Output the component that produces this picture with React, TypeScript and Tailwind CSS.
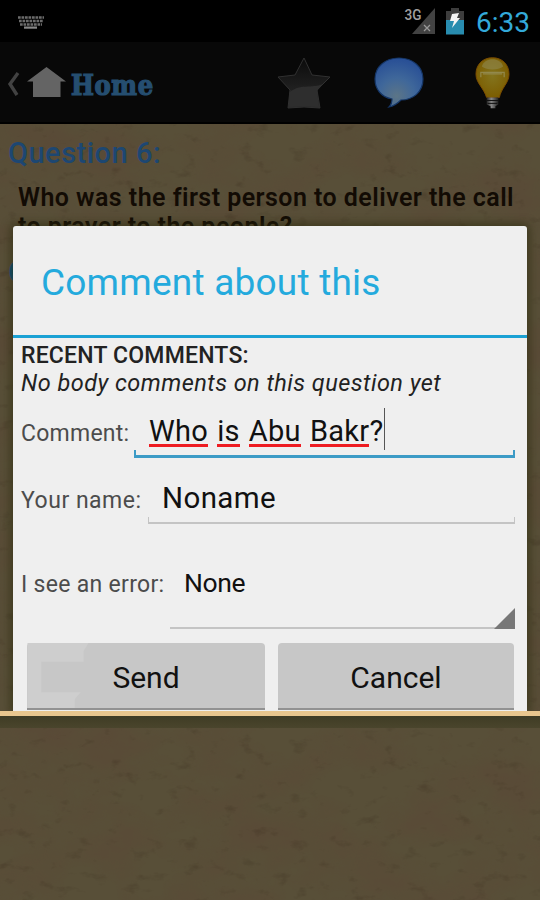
import type { ReactNode } from 'react'

function Paper() {
  return (
    <svg className="absolute inset-0 h-full w-full" preserveAspectRatio="none">
      <filter id="grain" x="0" y="0" width="100%" height="100%" colorInterpolationFilters="sRGB">
        <feTurbulence type="fractalNoise" baseFrequency="0.015 0.02" numOctaves="5" seed="8" />
        <feColorMatrix values="0 0 0 0 0.36  0 0 0 0 0.27  0 0 0 0 0.21  1.6 0 0 0 -0.6" />
      </filter>
      <filter id="specks" x="0" y="0" width="100%" height="100%" colorInterpolationFilters="sRGB">
        <feTurbulence type="fractalNoise" baseFrequency="0.055 0.09" numOctaves="4" seed="21" />
        <feColorMatrix values="0 0 0 0 0.22  0 0 0 0 0.17  0 0 0 0 0.11  0 4 0 0 -2.5" />
      </filter>
      <rect width="100%" height="100%" filter="url(#grain)" opacity="0.6" />
      <rect width="100%" height="100%" filter="url(#specks)" opacity="0.24" />
    </svg>
  )
}

function StatusBar() {
  return (
    <div className="flex h-[42px] items-start justify-between bg-black pl-[18px] pr-[11px]">
      <svg className="mt-4 h-[13px] w-[26px]" viewBox="0 0 26 13">
        <path d="M0 1.500h26M1 5h24M2 8.500h22" stroke="#6c6c6c" strokeWidth="2.6" strokeDasharray="2.7 0.8" fill="none" />
        <path d="M6 11.600h13" stroke="#888" strokeWidth="2.200" />
      </svg>
      <div className="flex items-start">
        <svg className="mt-[7px] h-7 w-8" viewBox="0 0 32 28">
          <path d="M8 27 31 1v26z" fill="#424242" />
          <path d="m20 18 6 6m0-6-6 6" stroke="#999" strokeWidth="1.3" />
          <text x="0.5" y="12.500" fontSize="15" fontWeight="500" fill="#a0a0a0" fontFamily="Roboto, sans-serif" textLength="17" lengthAdjust="spacingAndGlyphs">3G</text>
        </svg>
        <svg className="ml-[10px] mt-2 h-[27px] w-[18px]" viewBox="0 0 18 27">
          <path d="M0 3h5V0h8v3h5v10H0z" fill="#3d3d3d" />
          <path d="M0 12h18v14.500H0z" fill="#288caf" />
          <path d="m6 6 7-1-2 5h3L6 20l2-7H4z" fill="#f4f4f4" />
        </svg>
        <span className="ml-3 mt-[7px] w-[53px] whitespace-nowrap text-[28px] leading-8 text-[#33a9d9]">6:33</span>
      </div>
    </div>
  )
}

function ActionBar() {
  return (
    <div className="flex h-[82px] items-center border-b-2 border-black bg-[#080808]">
      <svg className="ml-[7px] mt-[3px] h-[26px] w-[13px]" viewBox="0 0 13 26">
        <path d="M11 2 3 13l7 11" fill="none" stroke="#424242" strokeWidth="3.4" />
      </svg>
      <svg className="ml-[7px] h-[30px] w-[39px]" viewBox="0 0 39 30">
        <path d="M19.500 0 39 14.500h-5.500V30H6V14.500H0z" fill="#646464" />
      </svg>
      <span className="ml-[5px] mt-[7px] w-[83px] whitespace-nowrap font-['DejaVu_Serif_Condensed','DejaVu_Serif',serif] text-[27px] font-bold leading-8 tracking-[0.6px] text-[#254e70] [-webkit-text-stroke:1.2px_#254e70]">
        Home
      </span>
      <svg className="ml-[122px] mt-[2px] h-[54px] w-[56px] shrink-0" viewBox="0 0 56 54">
        <defs>
          <linearGradient id="star" x1="0" y1="0" x2="0" y2="1">
            <stop offset="0" stopColor="#0b0b0b" />
            <stop offset="0.5" stopColor="#1c1c1c" />
            <stop offset="1" stopColor="#2c2c2c" />
          </linearGradient>
        </defs>
        <path d="m28 2 8 17 18 2-13 13 3 18-16-1-16 1 2-18L2 21l17-2z" fill="url(#star)" stroke="#303030" />
        <path d="M13 37c10-10 23-4 34-9l-6 7 2 16-15-1-15 1z" fill="#2e2e2e" />
      </svg>
      <svg className="ml-[40px] h-[54px] w-[54px] shrink-0" viewBox="0 0 54 54">
        <defs>
          <radialGradient id="bubble" cx="0.45" cy="0.78" r="0.75">
            <stop offset="0" stopColor="#5c7587" />
            <stop offset="0.5" stopColor="#3f679a" />
            <stop offset="1" stopColor="#295096" />
          </radialGradient>
        </defs>
        <path d="M27 3c14 0 24 9 24 21 0 13-10 21-22 21-3 3-7 6-12 7 3-3 3-5 3-8C9 42 3 34 3 24 3 12 13 3 27 3z" fill="url(#bubble)" stroke="#153667" strokeWidth="1.2" />
      </svg>
      <svg className="ml-[49px] mt-[2px] h-[54px] w-[35px] shrink-0" viewBox="0 0 36 54">
        <defs>
          <radialGradient id="bulb" cx="0.5" cy="0.45" r="0.55">
            <stop offset="0" stopColor="#83741e" />
            <stop offset="1" stopColor="#7c5d00" />
          </radialGradient>
          <linearGradient id="base">
            <stop offset="0" stopColor="#222" />
            <stop offset="0.4" stopColor="#888" />
            <stop offset="1" stopColor="#222" />
          </linearGradient>
        </defs>
        <path d="M18 1c10 0 17 7 17 17 0 9-8 14-10 24H12C9 32 1 27 1 18 1 8 8 1 18 1z" fill="url(#bulb)" stroke="#7c4c00" />
        <path d="M7 10C10 0 26 0 29 10c-5 4-17 4-22 0z" fill="#8f8a56" opacity="0.55" />
        <path d="M6 21v-5h24v5M8 17.500h20" stroke="#96905a" strokeWidth="1.3" fill="none" opacity="0.8" />
        <path d="M12 42h12v7l-3 2v2h-5v-2l-4-2z" fill="url(#base)" />
        <path d="M12 45h12M13 48h10" stroke="#111" />
      </svg>
    </div>
  )
}

function Typo({ children }: { children: ReactNode }) {
  return <span className="h-[37px] border-b-[3px] border-[#ee1c22]">{children}</span>
}

function Dialog() {
  return (
    <div className="absolute left-[13px] top-[226px] z-10 h-[485px] w-[514px] overflow-hidden rounded-t-[3px] bg-[#efefef] shadow-[0_0_9px_3px_rgba(45,45,15,0.6)]">
      <h2 className="h-[112px] border-b-[3px] border-[#1ba1d4] pl-7 pt-[33px] text-[37px] leading-[48px] tracking-[0.22px] text-[#24aadd]">
        Comment about this
      </h2>
      <div className="pl-2 pr-3 text-[#222]">
        <p className="pt-1 text-[23px] font-medium leading-7 tracking-[0.2px]">RECENT COMMENTS:</p>
        <p className="text-[23.500px] italic leading-[27px] tracking-[0.46px]">No body comments on this question yet</p>
        <div className="mt-[11px] flex h-[54px] items-start">
          <span className="mt-3 w-[113px] whitespace-nowrap text-[23px] leading-7 tracking-[0.25px] text-[#4c4c4c]">
            Comment:
          </span>
          <div className="relative flex h-[50px] flex-1 items-start gap-[9px] pl-[15px] pt-[2px] text-[29px] leading-[42px] tracking-[0.3px] text-[#111]">
            <Typo>Who</Typo>
            <Typo>is</Typo>
            <Typo>Abu</Typo>
            <span className="flex">
              <Typo>Bakr</Typo>?<i className="-mt-[2px] ml-px h-[42px] w-px bg-[#555]" />
            </span>
            <i className="absolute bottom-0 left-0 right-0 h-2 border-x-2 border-b-[3px] border-[#3c9bc6]" />
          </div>
        </div>
        <div className="mt-3 flex h-[54px] items-start">
          <span className="mt-[13px] w-[127px] whitespace-nowrap text-[23px] leading-7 tracking-[0.5px] text-[#4c4c4c]">
            Your name:
          </span>
          <div className="relative h-[50px] flex-1 pl-[14px] pt-[3px] text-[29.500px] leading-[42px] tracking-[0.4px] text-[#111]">
            Noname
            <i className="absolute bottom-0 left-0 right-0 h-[7px] border-x border-b-2 border-[#c4c4c4]" />
          </div>
        </div>
        <div className="mt-[26px] flex h-[77px] items-start">
          <span className="mt-[17px] w-[149px] whitespace-nowrap text-[23px] leading-7 tracking-[0.3px] text-[#4c4c4c]">
            I see an error:
          </span>
          <div className="relative h-[75px] flex-1 border-b-2 border-[#c4c4c4] pl-[14px] pt-[11px] text-[26.500px] leading-9 tracking-[-0.4px] text-[#111]">
            None
            <svg className="absolute -bottom-[2px] right-0 h-[21px] w-[21px]" viewBox="0 0 21 21">
              <path d="M0 21 21 0v21z" fill="#777" />
            </svg>
          </div>
        </div>
        <div className="mt-3 flex gap-[13px] pl-[6px] text-[30px] leading-[69px] text-[#111]">
          <button className="relative h-[67px] w-[238px] rounded-t-sm border-b-2 border-[#929292] bg-[#c7c7c7]">
            <svg className="absolute left-0 top-0 h-[65px] w-[64px]" viewBox="0 0 64 66">
              <path d="M0 0h62l-5 8v11H14v31h40l-6 7v9H0z" fill="#cecece" />
            </svg>
            <span className="relative">Send</span>
          </button>
          <button className="h-[67px] w-[236px] rounded-t-sm border-b-2 border-[#929292] bg-[#c7c7c7]">Cancel</button>
        </div>
      </div>
    </div>
  )
}

export default function App() {
  return (
    <div className="relative flex h-[900px] w-[540px] flex-col overflow-hidden bg-black font-[Roboto,sans-serif]">
      <StatusBar />
      <ActionBar />
      <main className="relative h-[587px] overflow-hidden bg-[#584f38]">
        <Paper />
        <div className="relative pl-2 pt-[11px]">
          <h1 className="text-[29px] font-medium leading-9 tracking-[0.5px] text-[#1d4772]">Question 6:</h1>
          <p className="w-[520px] pl-[10px] pt-3 text-[25px] font-semibold leading-[29px] tracking-[0.45px] text-[#120b04]">
            Who was the first person to deliver the call to prayer to the people?
          </p>
          <h1 className="mt-[13px] text-[29px] font-medium leading-9 text-[#07527e]">C</h1>
        </div>
      </main>
      <Dialog />
      <footer className="relative z-20 flex-1 border-t-[5px] border-[#e9c68e] bg-[#584f38]">
        <Paper />
        <div className="absolute inset-x-0 top-0 h-3 bg-gradient-to-b from-[#3f3c25] to-[#4a452c]" />
      </footer>
    </div>
  )
}
